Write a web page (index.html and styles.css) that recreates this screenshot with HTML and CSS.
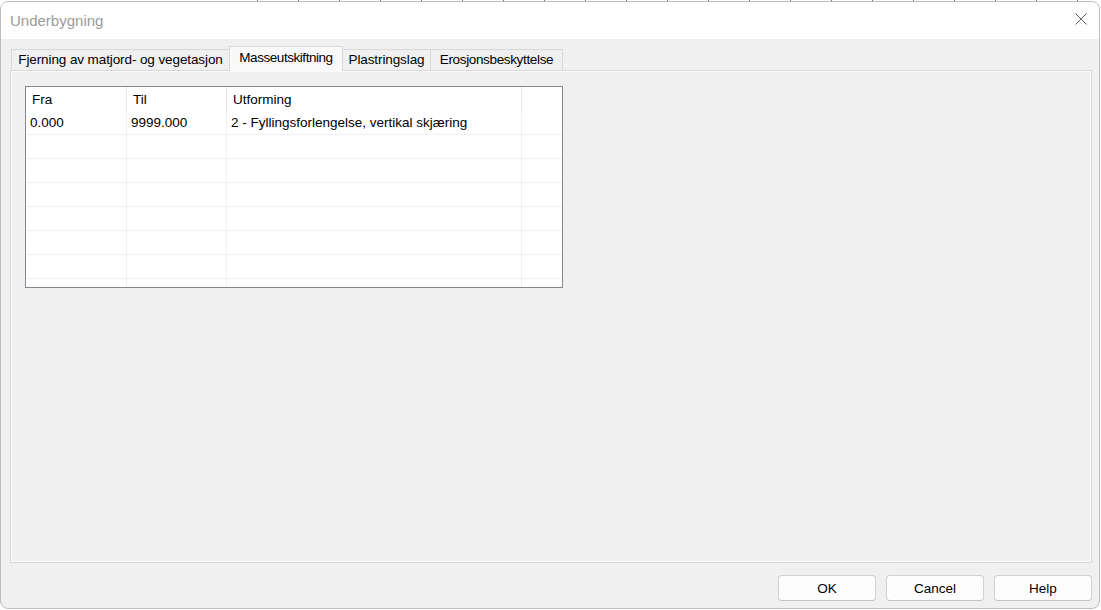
FILE: index.html
```html
<!DOCTYPE html>
<html lang="nb">
<head>
  <meta charset="UTF-8">
  <title>Underbygning</title>
  <link rel="stylesheet" href="styles.css">
</head>
<body>

  <div class="ruler"></div>

  <div class="window">
    <!-- Title bar -->
    <div class="titlebar">
      <span class="title">Underbygning</span>
      <button class="close-btn" aria-label="Lukk">
        <svg width="12" height="12" viewBox="0 0 12 12">
          <path d="M0.5 0.5 L11.5 11.5 M11.5 0.5 L0.5 11.5" stroke="#5f5f5f" stroke-width="1" fill="none"/>
        </svg>
      </button>
    </div>

    <div class="content">
      <div class="tabs">
        <div class="tab tab-matjord">Fjerning av matjord- og vegetasjon</div>
        <div class="tab tab-masse active">Masseutskiftning</div>
        <div class="tab tab-plastring">Plastringslag</div>
        <div class="tab tab-erosjon">Erosjonsbeskyttelse</div>
      </div>

      <div class="panel">
        <div class="grid">
          <div class="grid-row grid-head">
            <div class="cell">Fra</div>
            <div class="cell">Til</div>
            <div class="cell">Utforming</div>
            <div class="cell"></div>
          </div>
          <div class="grid-row">
            <div class="cell">0.000</div>
            <div class="cell">9999.000</div>
            <div class="cell">2 - Fyllingsforlengelse, vertikal skjæring</div>
            <div class="cell"></div>
          </div>
          <div class="grid-row"><div class="cell"></div><div class="cell"></div><div class="cell"></div><div class="cell"></div></div>
          <div class="grid-row"><div class="cell"></div><div class="cell"></div><div class="cell"></div><div class="cell"></div></div>
          <div class="grid-row"><div class="cell"></div><div class="cell"></div><div class="cell"></div><div class="cell"></div></div>
          <div class="grid-row"><div class="cell"></div><div class="cell"></div><div class="cell"></div><div class="cell"></div></div>
          <div class="grid-row"><div class="cell"></div><div class="cell"></div><div class="cell"></div><div class="cell"></div></div>
          <div class="grid-row"><div class="cell"></div><div class="cell"></div><div class="cell"></div><div class="cell"></div></div>
          <div class="grid-row"><div class="cell"></div><div class="cell"></div><div class="cell"></div><div class="cell"></div></div>
        </div>
      </div>

      <div class="buttons">
        <button class="btn">OK</button>
        <button class="btn">Cancel</button>
        <button class="btn">Help</button>
      </div>
    </div>
  </div>

</body>
</html>
```

FILE: styles.css
```css
body {
  margin: 0;
  background: #ffffff;
  font-family: 'Liberation Sans', Arial, sans-serif;
  font-size: 13.5px;
  color: #000;
  overflow: hidden;
}

/* desktop ruler peeking out above the dialog */
.ruler {
  height: 1px;
  margin-left: 257px;
  background: repeating-linear-gradient(to right, #6a6a6a 0, #6a6a6a 1px, transparent 1px, transparent 41px);
}

.window {
  width: 1100px;
  height: 608px;
  box-sizing: border-box;
  border: 1px solid #bdbdbd;
  border-radius: 8px;
  background: #f0f0f0;
  display: flex;
  flex-direction: column;
  overflow: hidden;
}

.titlebar {
  height: 37px;
  flex-shrink: 0;
  background: #fff;
  display: flex;
  align-items: center;
  justify-content: space-between;
  padding: 0 12px 0 9px;
}

.title {
  font-size: 15px;
  color: #9b9b9b;
  margin-top: -1px;
}

.close-btn {
  border: none;
  background: none;
  padding: 0;
  width: 12px;
  height: 12px;
  display: flex;
  margin-top: -3px;
}

.content {
  flex: 1;
  display: flex;
  flex-direction: column;
  padding: 8px 7px 0 9px;
}

/* tabs */
.tabs {
  display: flex;
  align-items: flex-end;
  height: 23px;
  padding-left: 1px;
}

.tab {
  height: 21px;
  box-sizing: border-box;
  border: 1px solid #d9d9d9;
  border-bottom: none;
  background: #f0f0f0;
  line-height: 20px;
  text-align: center;
  white-space: nowrap;
  letter-spacing: -0.1px;
}

.tab + .tab {
  margin-left: -1px;
}

.tab.active {
  height: 25px;
  margin-bottom: -1px;
  background: #f9f9f9;
  line-height: 21px;
  position: relative;
  z-index: 1;
}

.tab-matjord { width: 219px; }
.tab-masse { width: 114px; letter-spacing: -0.45px; }
.tab-plastring { width: 89px; }
.tab-erosjon { width: 133px; letter-spacing: -0.35px; }

.panel {
  height: 493px;
  box-sizing: border-box;
  border: 1px solid #d9d9d9;
  box-shadow: inset 1px 1px 0 #fafafa, inset -1px -1px 0 #fafafa;
  padding: 15px 14px;
}

/* list grid */
.grid {
  width: 538px;
  height: 202px;
  box-sizing: border-box;
  border: 1px solid #828790;
  background: #fff;
  overflow: hidden;
}

.grid-row {
  display: grid;
  grid-template-columns: 101px 100px 295px 1fr;
  height: 24px;
  box-sizing: border-box;
  border-bottom: 1px solid #f0f0f0;
}

.cell {
  border-right: 1px solid #f0f0f0;
  padding-left: 4px;
  line-height: 23px;
  white-space: nowrap;
  overflow: hidden;
}

.cell:last-child {
  border-right: none;
}

.grid-head {
  border-bottom: none;
}

.grid-head .cell {
  padding-left: 6px;
  border-right-color: #e5e5e5;
  line-height: 25px;
}

/* dialog buttons */
.buttons {
  display: flex;
  justify-content: flex-end;
  gap: 10px;
  padding-top: 12px;
}

.btn {
  width: 98px;
  height: 26px;
  border: 1px solid #d0d0d0;
  border-bottom-color: #c4c4c4;
  border-radius: 4px;
  background: #fdfdfd;
  font-family: 'Liberation Sans', Arial, sans-serif;
  font-size: 13.5px;
  color: #000;
  padding: 0;
}
```
